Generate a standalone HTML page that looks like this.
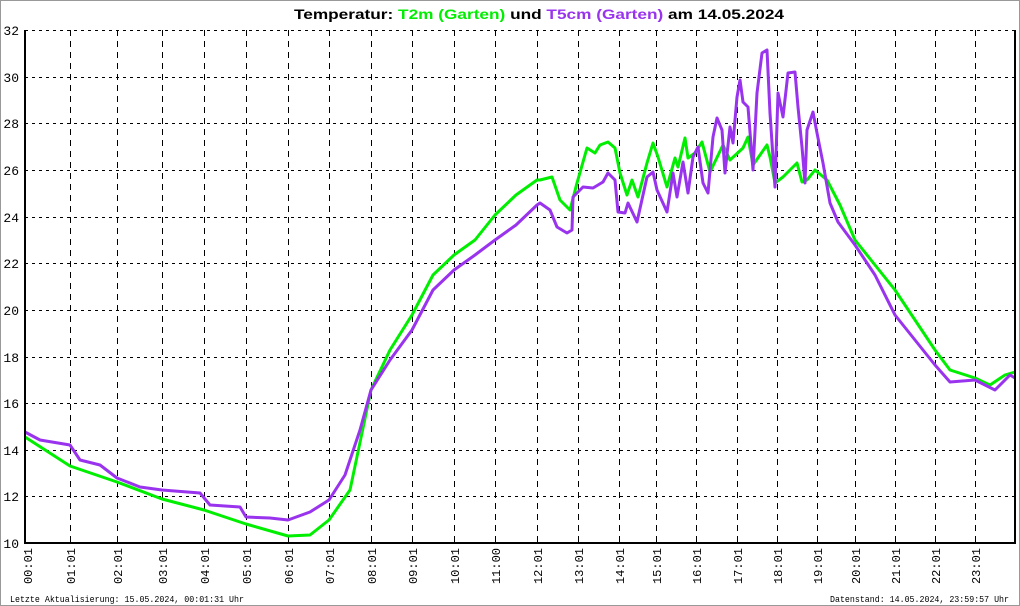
<!DOCTYPE html><html><head><style>body{margin:0;background:#fff}svg{display:block}</style></head><body>
<svg width="1020" height="606" xmlns="http://www.w3.org/2000/svg" font-family="Liberation Mono, monospace">
<rect x="0.5" y="0.5" width="1019" height="605" fill="#fff" stroke="#999"/>
<text x="294" y="19" font-size="14" font-weight="bold" font-family="Liberation Sans, sans-serif" textLength="490" lengthAdjust="spacingAndGlyphs"><tspan fill="#000">Temperatur: </tspan><tspan fill="#00ee00">T2m (Garten)</tspan><tspan fill="#000"> und </tspan><tspan fill="#9933ee">T5cm (Garten)</tspan><tspan fill="#000"> am 14.05.2024</tspan></text>
<g stroke="#000" stroke-dasharray="3,4" stroke-width="1">
<line x1="25" y1="30.5" x2="1015" y2="30.5"/><line x1="25" y1="77.5" x2="1015" y2="77.5"/><line x1="25" y1="123.5" x2="1015" y2="123.5"/><line x1="25" y1="170.5" x2="1015" y2="170.5"/><line x1="25" y1="217.5" x2="1015" y2="217.5"/><line x1="25" y1="263.5" x2="1015" y2="263.5"/><line x1="25" y1="310.5" x2="1015" y2="310.5"/><line x1="25" y1="357.5" x2="1015" y2="357.5"/><line x1="25" y1="403.5" x2="1015" y2="403.5"/><line x1="25" y1="450.5" x2="1015" y2="450.5"/><line x1="25" y1="496.5" x2="1015" y2="496.5"/>
</g>
<g stroke="#000" stroke-dasharray="6,5" stroke-width="1">
<line x1="70.5" y1="30" x2="70.5" y2="543"/><line x1="117.5" y1="30" x2="117.5" y2="543"/><line x1="162.5" y1="30" x2="162.5" y2="543"/><line x1="204.5" y1="30" x2="204.5" y2="543"/><line x1="246.5" y1="30" x2="246.5" y2="543"/><line x1="288.5" y1="30" x2="288.5" y2="543"/><line x1="329.5" y1="30" x2="329.5" y2="543"/><line x1="371.5" y1="30" x2="371.5" y2="543"/><line x1="412.5" y1="30" x2="412.5" y2="543"/><line x1="454.5" y1="30" x2="454.5" y2="543"/><line x1="495.5" y1="30" x2="495.5" y2="543"/><line x1="537.5" y1="30" x2="537.5" y2="543"/><line x1="578.5" y1="30" x2="578.5" y2="543"/><line x1="619.5" y1="30" x2="619.5" y2="543"/><line x1="656.5" y1="30" x2="656.5" y2="543"/><line x1="696.5" y1="30" x2="696.5" y2="543"/><line x1="737.5" y1="30" x2="737.5" y2="543"/><line x1="777.5" y1="30" x2="777.5" y2="543"/><line x1="817.5" y1="30" x2="817.5" y2="543"/><line x1="855.5" y1="30" x2="855.5" y2="543"/><line x1="895.5" y1="30" x2="895.5" y2="543"/><line x1="935.5" y1="30" x2="935.5" y2="543"/><line x1="975.5" y1="30" x2="975.5" y2="543"/>
</g>
<polyline fill="none" stroke="#00ee00" stroke-width="3" stroke-linejoin="round" points="25,437 70,466 117,482 162,499 204,510 246,524 288,536 310,535 329,520 350,490 371,390 390,350 412,315 433,275 454,255 475,240 495,215 516,195 537,180 540,180 552,177 560,200 570,210 577,183 587,148 595,153 600,145 608,142 615,148 620,173 627,195 632,180 638,197 647,163 653,143 658,157 667,187 675,158 678,167 685,138 688,158 695,153 702,142 710,172 723,145 730,160 743,148 748,137 753,165 767,145 770,157 775,183 783,177 797,163 802,182 807,180 815,170 827,180 840,205 855,240 875,265 895,290 915,320 935,350 950,370 975,378 990,385 1005,375 1015,372"/>
<polyline fill="none" stroke="#9933ee" stroke-width="3" stroke-linejoin="round" points="25,432 40,440 70,445 80,460 100,465 117,478 140,487 162,490 200,493 210,505 240,507 246,517 270,518 288,520 310,512 329,500 345,475 360,430 371,390 390,360 412,330 433,290 454,270 475,255 495,240 516,225 537,205 540,203 550,210 557,227 567,233 572,230 573,197 583,187 593,188 603,182 608,173 615,180 618,212 625,213 628,203 637,222 647,177 653,172 657,190 667,212 673,173 677,197 683,162 688,193 693,157 698,147 703,183 708,193 713,137 717,118 722,130 725,173 730,127 733,143 737,97 740,80 743,102 748,107 753,170 757,93 762,53 767,50 770,113 775,187 778,93 783,117 788,73 795,72 798,107 802,147 805,183 807,130 813,112 817,133 823,163 830,203 838,222 855,245 875,275 895,315 915,340 935,365 950,382 975,380 995,390 1010,375 1015,378"/>
<g stroke="#000" stroke-width="2" fill="none"><line x1="25" y1="30" x2="25" y2="544"/><line x1="1015" y1="30" x2="1015" y2="544"/><line x1="24" y1="543" x2="1016" y2="543"/></g>
<g font-size="13" fill="#000" text-anchor="end">
<text x="19" y="35">32</text><text x="19" y="82">30</text><text x="19" y="128">28</text><text x="19" y="175">26</text><text x="19" y="222">24</text><text x="19" y="268">22</text><text x="19" y="315">20</text><text x="19" y="362">18</text><text x="19" y="408">16</text><text x="19" y="455">14</text><text x="19" y="501">12</text><text x="19" y="548">10</text>
</g>
<g font-size="12" fill="#000" text-anchor="end">
<text transform="translate(32,548) rotate(-90)">00:01</text><text transform="translate(75,548) rotate(-90)">01:01</text><text transform="translate(122,548) rotate(-90)">02:01</text><text transform="translate(167,548) rotate(-90)">03:01</text><text transform="translate(209,548) rotate(-90)">04:01</text><text transform="translate(251,548) rotate(-90)">05:01</text><text transform="translate(293,548) rotate(-90)">06:01</text><text transform="translate(334,548) rotate(-90)">07:01</text><text transform="translate(376,548) rotate(-90)">08:01</text><text transform="translate(417,548) rotate(-90)">09:01</text><text transform="translate(459,548) rotate(-90)">10:01</text><text transform="translate(500,548) rotate(-90)">11:00</text><text transform="translate(542,548) rotate(-90)">12:01</text><text transform="translate(583,548) rotate(-90)">13:01</text><text transform="translate(624,548) rotate(-90)">14:01</text><text transform="translate(661,548) rotate(-90)">15:01</text><text transform="translate(701,548) rotate(-90)">16:01</text><text transform="translate(742,548) rotate(-90)">17:01</text><text transform="translate(782,548) rotate(-90)">18:01</text><text transform="translate(822,548) rotate(-90)">19:01</text><text transform="translate(860,548) rotate(-90)">20:01</text><text transform="translate(900,548) rotate(-90)">21:01</text><text transform="translate(940,548) rotate(-90)">22:01</text><text transform="translate(980,548) rotate(-90)">23:01</text>
</g>
<text x="10" y="602" font-size="9" textLength="234" lengthAdjust="spacingAndGlyphs">Letzte Aktualisierung: 15.05.2024, 00:01:31 Uhr</text>
<text x="830" y="602" font-size="9" textLength="179" lengthAdjust="spacingAndGlyphs">Datenstand: 14.05.2024, 23:59:57 Uhr</text>
</svg>
</body></html>
